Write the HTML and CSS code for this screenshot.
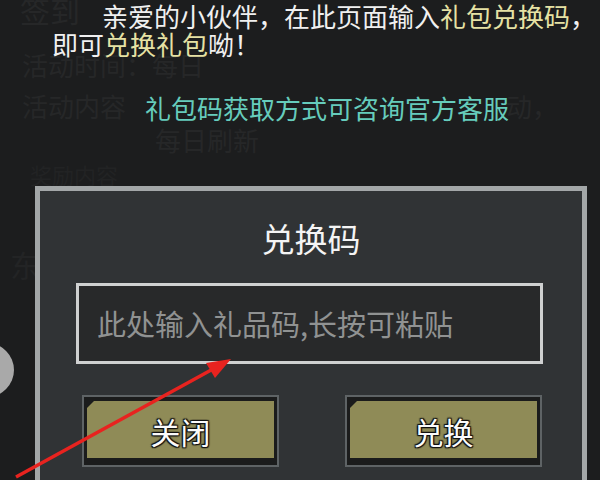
FILE: index.html
```html
<!DOCTYPE html>
<html>
<head>
<meta charset="utf-8" />
<link rel="stylesheet" href="styles.css">
<title>兑换码</title>
</head>
<body>
<div class="screen">
  <!-- 背景页面（被遮罩压暗） -->
  <div class="page">
    <div class="ghost g-title">签到</div>
    <div class="ghost g-time">活动时间：每日</div>
    <div class="ghost g-content"><span>活动内容</span><span class="g-tail">动，</span></div>
    <div class="ghost g-daily">每日刷新</div>
    <div class="ghost g-reward">奖励内容</div>
    <div class="ghost g-side">东</div>
  </div>

  <!-- 遮罩层 -->
  <div class="overlay">
    <p class="tip">亲爱的小伙伴，在此页面输入<em>礼包兑换码</em>，<br /><span class="tip-2">即可<em>兑换礼包</em>呦！</span></p>
    <p class="service">礼包码获取方式可咨询官方客服</p>

    <div class="dialog">
      <h2 class="dialog-title">兑换码</h2>
      <div class="code-input">此处输入礼品码,长按可粘贴</div>
      <div class="btn-row">
        <div class="btn"><div class="btn-face">关闭</div></div>
        <div class="btn"><div class="btn-face">兑换</div></div>
      </div>
    </div>
  </div>

  <div class="float-ball"></div>

  <svg class="arrow" width="600" height="480" viewBox="0 0 600 480">
    <line x1="16" y1="477" x2="213" y2="369" stroke="#e8231f" stroke-width="3.5" />
    <polygon points="231,359 215,378 206,363" fill="#e8231f" />
  </svg>
</div>
</body>
</html>
```

FILE: styles.css
```css
*{margin:0;padding:0;box-sizing:border-box;}
body{background:#1c1d1e;font-family:"Noto Sans CJK SC","Noto Sans",sans-serif;overflow:hidden;}
.screen{width:600px;height:480px;position:relative;overflow:hidden;}

/* 背景页面 */
.ghost{color:#262728;font-size:26px;line-height:28px;white-space:nowrap;}
.g-title{margin:-4px 0 0 20px;font-size:30px;}
.g-time{margin:27px 0 0 22px;}
.g-content{margin:13px 0 0 22px;display:flex;}
.g-tail{margin-left:380px;}
.g-daily{margin:6px 0 0 155px;}
.g-reward{margin:6px 0 0 30px;color:#222324;font-size:22px;}
.g-side{margin:62px 0 0 10px;color:#232425;font-size:30px;}

/* 遮罩 */
.overlay{position:absolute;left:0;top:0;width:600px;height:480px;}
.tip{font-size:26px;line-height:28px;color:#f0f0f0;padding:2px 0 0 102px;white-space:nowrap;}
.tip em{font-style:normal;color:#e6e2a4;}
.tip-2{margin-left:-50px;}
.service{font-size:26px;line-height:28px;color:#66ccbc;margin:36px 0 0 145px;white-space:nowrap;}

/* 弹窗 */
.dialog{margin:64px 0 0 35px;width:552px;height:320px;background:#303335;border:5px solid #a3a7a8;padding:27px 0 0 36px;}
.dialog-title{font-size:33px;font-weight:normal;line-height:40px;color:#f4f4f4;text-align:center;margin-left:-36px;}
.code-input{margin-top:25px;width:467px;height:81px;border:3px solid #cfd1d1;background:#28292a;color:#909292;font-size:29px;line-height:75px;padding-left:18px;white-space:nowrap;}
.btn-row{display:flex;gap:66px;margin:31px 0 0 6px;}
.btn{width:197px;height:72px;border:2px solid #5e6365;background:#1b1c1c;padding:4px 3px 7px 3px;}
.btn-face{position:relative;height:100%;background:#8f8b57;color:#fbfbfb;font-size:30px;line-height:60px;text-align:center;text-shadow:0 0 2px #111,1px 1px 1px #111,-1px -1px 1px #111,1px -1px 1px #111,-1px 1px 1px #111;}
.btn-face:before{content:"";position:absolute;left:0;top:0;border-top:7px solid #1b1c1c;border-right:7px solid transparent;}

/* 侧边悬浮球 */
.float-ball{position:absolute;left:-40px;top:343px;width:54px;height:54px;border-radius:50%;background:#a9a9a9;}
.arrow{position:absolute;left:0;top:0;pointer-events:none;}
```
